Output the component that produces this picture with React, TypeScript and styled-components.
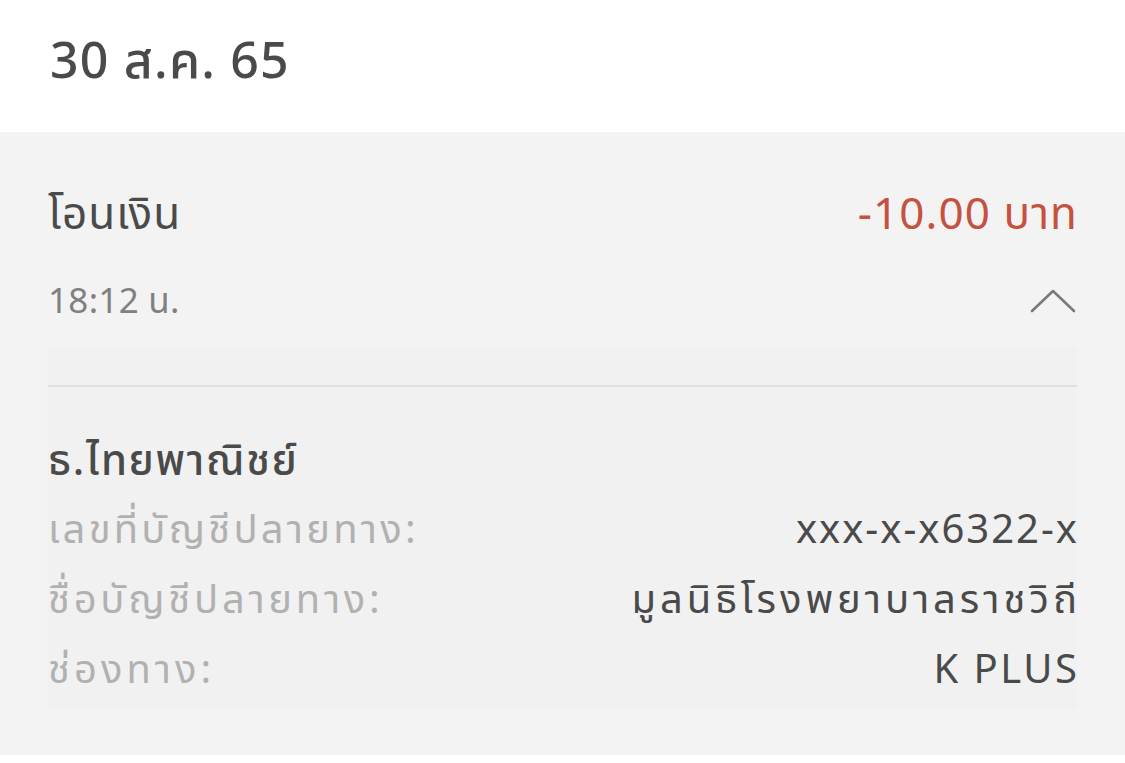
import React from "react";
import styled, { createGlobalStyle } from "styled-components";

const GlobalStyle = createGlobalStyle`
  body {
    margin: 0;
    background: #ffffff;
    font-family: "Noto Sans Thai", "Noto Sans", "DejaVu Sans", sans-serif;
  }
`;

const Page = styled.div`
  width: 1125px;
  height: 763px;
  background: #ffffff;
  overflow: hidden;
`;

const DateHeader = styled.div`
  height: 132px;
  box-sizing: border-box;
  display: flex;
  align-items: center;
  padding: 0 0 6px 50px;
  font-size: 50px;
  font-weight: 500;
  letter-spacing: 1.2px;
  color: #4a4a4a;
`;

const Section = styled.section`
  background: #f3f3f3;
  height: 623px;
  padding: 54px 48px 0;
  box-sizing: border-box;
`;

const Row = styled.div`
  display: flex;
  justify-content: space-between;
  align-items: center;
`;

const Title = styled.div`
  font-size: 44px;
  line-height: 60px;
  letter-spacing: 1px;
  color: #4a4a4a;
`;

const Amount = styled.div`
  font-size: 44px;
  line-height: 60px;
  letter-spacing: 1.1px;
  color: #c5513f;
  margin-right: -1px;
`;

const Time = styled.div`
  font-size: 35px;
  line-height: 50px;
  letter-spacing: 0.3px;
  color: #808080;
`;

const TimeRow = styled(Row)`
  margin-top: 32px;
`;

const Chevron = styled.svg`
  width: 46px;
  height: 26px;
  margin: 0 1px 6px 0;
`;

const Details = styled.div`
  margin-top: 19px;
  padding: 38px 0 3px;
  background: #f1f1f1;
`;

const Divider = styled.div`
  height: 2px;
  background: #e0e0e0;
`;

const BankName = styled.div`
  margin-top: 47px;
  font-size: 42px;
  font-weight: 500;
  line-height: 56px;
  letter-spacing: 1.7px;
  color: #4a4a4a;
`;

const InfoList = styled.div`
  margin-top: 6px;
`;

const InfoRow = styled(Row)`
  height: 70px;
`;

const Label = styled.span<{ $spacing: number }>`
  font-size: 40px;
  letter-spacing: ${(p) => p.$spacing}px;
  color: #b1b1b1;
`;

const Value = styled.span<{ $spacing: number }>`
  font-size: 40px;
  letter-spacing: ${(p) => p.$spacing}px;
  margin-right: -${(p) => p.$spacing}px;
  color: #4a4a4a;
`;

const rows = [
  { label: "เลขที่บัญชีปลายทาง:", labelSpacing: 3.2, value: "xxx-x-x6322-x", spacing: 2 },
  { label: "ชื่อบัญชีปลายทาง:", labelSpacing: 3.7, value: "มูลนิธิโรงพยาบาลราชวิถี", spacing: 3.9 },
  { label: "ช่องทาง:", labelSpacing: 4, value: "K PLUS", spacing: 2.5 },
];

const App: React.FC = () => {
  return (
    <Page>
      <GlobalStyle />
      <DateHeader>30 ส.ค. 65</DateHeader>
      <Section>
        <Row>
          <Title>โอนเงิน</Title>
          <Amount>-10.00 บาท</Amount>
        </Row>
        <TimeRow>
          <Time>18:12 น.</Time>
          <Chevron viewBox="0 0 46 26">
            <polyline
              points="2,24 23,4 44,24"
              fill="none"
              stroke="#7a7a7a"
              strokeWidth="2.6"
              strokeLinecap="round"
              strokeLinejoin="round"
            />
          </Chevron>
        </TimeRow>
        <Details>
          <Divider />
          <BankName>ธ.ไทยพาณิชย์</BankName>
          <InfoList>
            {rows.map((r) => (
              <InfoRow key={r.label}>
                <Label $spacing={r.labelSpacing}>{r.label}</Label>
                <Value $spacing={r.spacing}>{r.value}</Value>
              </InfoRow>
            ))}
          </InfoList>
        </Details>
      </Section>
    </Page>
  );
};

export default App;
